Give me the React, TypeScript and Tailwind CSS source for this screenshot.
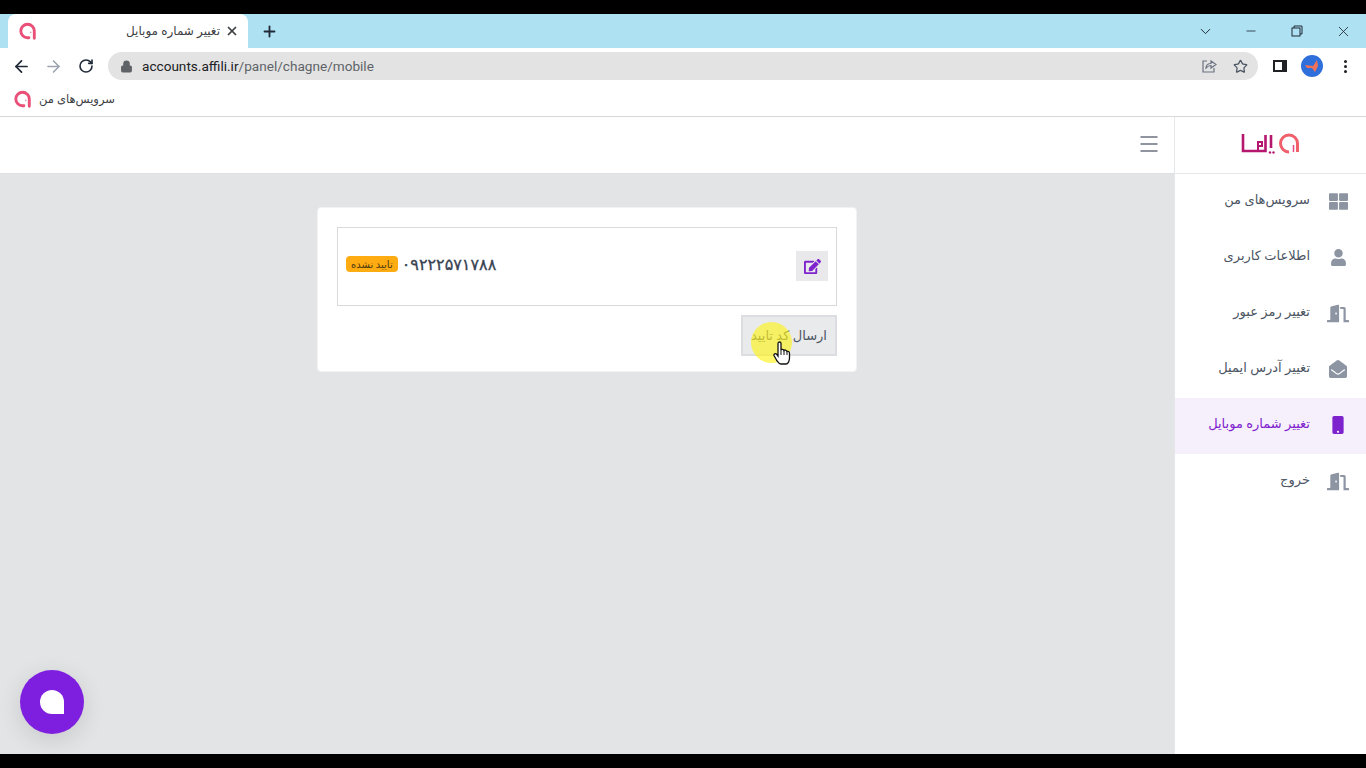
import { ArrowLeft, ArrowRight, RotateCw, Lock, Star, X, Plus, ChevronDown, Minus, Menu } from "lucide-react";
import { FaThLarge, FaUser, FaDoorOpen, FaEnvelopeOpen, FaMobile, FaEdit } from "react-icons/fa";
import type { ReactNode } from "react";

const FA = "font-['Noto_Sans','DejaVu_Sans',sans-serif]";

function AffiliMark({ size = 18 }: { size?: number }) {
  return (
    <svg width={size} height={size} viewBox="0 0 20 20" fill="none">
      <path d="M17 18 V10 A7.5 7.5 0 1 0 9.5 17.5 H11" stroke="#ea4f78" strokeWidth="3.2" strokeLinecap="round" />
      <circle cx="13" cy="11.5" r="1" fill="#d9a0b8" />
    </svg>
  );
}

function NavItem({ icon, label, active }: { icon: ReactNode; label: string; active?: boolean }) {
  return (
    <div className={`h-14 flex items-center pr-[17px] gap-[17px] ${active ? "bg-[#f6f0fc] text-[#7e22ce]" : "text-[#4b5563]"}`}>
      <span className="w-[22px] mb-[2px] flex justify-center shrink-0">{icon}</span>
      <span className="text-[13px] pb-[5px]">{label}</span>
    </div>
  );
}

export default function App() {
  return (
    <div className="h-screen overflow-hidden bg-black flex flex-col py-[14px] relative">
      {/* tab strip */}
      <div className="h-[34px] bg-[#aee1f1] flex items-end pl-2 shrink-0" dir="ltr">
        <div className="w-[240px] h-[34px] bg-white rounded-t-lg flex items-center pl-[11px] pr-[9px]">
          <AffiliMark />
          <span className={`ml-auto text-xs text-[#3c4043] ${FA}`} dir="rtl">تغییر شماره موبایل</span>
          <X size={14} strokeWidth={3} className="ml-[5px] text-[#3c4043]" />
        </div>
        <Plus size={17} strokeWidth={2.6} className="ml-[13px] mb-[8px] text-[#1f2937]" />
        <div className="ml-auto flex items-center h-full text-[#1f2937]">
          <ChevronDown size={17} strokeWidth={1.4} className="mr-[30px]" />
          <Minus size={14} strokeWidth={1.4} className="mr-[33px]" />
          <svg width="12" height="12" viewBox="0 0 12 12" fill="none" stroke="currentColor" className="mr-[32px]">
            <rect x="1" y="3" width="8" height="8" />
            <path d="M3 3V1H11V9H9" />
          </svg>
          <X size={17} strokeWidth={1.2} className="mr-[14px]" />
        </div>
      </div>

      {/* address bar */}
      <div className="h-9 bg-white flex items-center shrink-0" dir="ltr">
        <ArrowLeft size={19} strokeWidth={2.2} className="ml-3 text-[#1f2937]" />
        <ArrowRight size={19} strokeWidth={2} className="ml-[13px] text-[#9ca3af]" />
        <RotateCw size={16} strokeWidth={2.4} className="ml-[15px] text-[#1f2937]" />
        <div className="ml-[14px] w-[1150px] h-7 rounded-full bg-[#e3e3e3] flex items-center pl-[12px] pr-[10px]">
          <Lock size={13} fill="#5f6368" className="text-[#5f6368]" />
          <span className="ml-[9px] text-[13.6px] font-['Roboto',sans-serif] text-[#202124]">
            accounts.affili.ir<span className="text-[#5f6368]">/panel/chagne/mobile</span>
          </span>
          <svg width="16" height="16" viewBox="0 0 16 16" fill="none" stroke="#6b7280" strokeWidth="1.2" className="ml-auto">
            <path d="M6 3H2V14H13V10" />
            <path d="M5 10C5 7 7 5.5 10 5.5V3L15 6.5L10 10V7.5C8 7.5 6.5 8.5 5 10Z" />
          </svg>
          <Star size={15} strokeWidth={2} className="ml-[16px] text-[#4b5563]" />
        </div>
        <svg width="14" height="12" viewBox="0 0 14 12" className="ml-[15px]">
          <path d="M0 0H14V12H0Z M2 2V10H9V2Z" fill="#202124" fillRule="evenodd" />
        </svg>
        <div className="ml-[14px] w-[22px] h-[22px] rounded-full bg-[#2f6fdb] flex items-center justify-center">
          <svg width="14" height="12" viewBox="0 0 14 12">
            <path d="M0 5L8 6L12 0L13 6L10 12L7 8L2 8Z" fill="#f0705a" />
          </svg>
        </div>
        <div className="ml-[21px] flex flex-col gap-[2px]">
          <span className="w-[3px] h-[3px] rounded-full bg-[#202124]" />
          <span className="w-[3px] h-[3px] rounded-full bg-[#202124]" />
          <span className="w-[3px] h-[3px] rounded-full bg-[#202124]" />
        </div>
      </div>

      {/* bookmarks */}
      <div className="h-[33px] bg-white border-b border-[#d8d8d8] flex items-center pl-[14px] pb-[2px] gap-[7px] shrink-0" dir="ltr">
        <AffiliMark />
        <span className={`text-[11.5px] text-[#3c4043] ${FA}`} dir="rtl">سرویس‌های من</span>
      </div>

      {/* page */}
      <div className={`flex-1 min-h-0 flex bg-[#e3e4e6] ${FA}`} dir="rtl">
        <aside className="w-[192px] bg-white border-l border-[#e5e7eb] shrink-0">
          <div className="h-[57px] flex items-center justify-center border-b border-[#e5e7eb]">
            <svg width="60" height="24" viewBox="0 0 60 24" fill="none">
              <path d="M2 1V18H24.5V2" stroke="#b5176f" strokeWidth="2.6" />
              <path d="M17 17V9H21V13H17" stroke="#b5176f" strokeWidth="2" />
              <path d="M30 2V15" stroke="#b5176f" strokeWidth="2.6" />
              <circle cx="29" cy="19.5" r="1.2" fill="#b5176f" />
              <circle cx="32.5" cy="19.5" r="1.2" fill="#b5176f" />
              <path d="M56.5 19V10.5A8.5 8.5 0 1 0 48 19" stroke="#f0606a" strokeWidth="3" />
              <path d="M52.5 12V19" stroke="#e84a7f" strokeWidth="1.5" />
            </svg>
          </div>
          <NavItem label="سرویس‌های من" icon={<FaThLarge size={19} className="text-[#8d95a3]" />} />
          <NavItem label="اطلاعات کاربری" icon={<FaUser size={17} className="text-[#8d95a3]" />} />
          <NavItem label="تغییر رمز عبور" icon={<FaDoorOpen size={23} className="text-[#8d95a3]" />} />
          <NavItem label="تغییر آدرس ایمیل" icon={<FaEnvelopeOpen size={18} className="text-[#8d95a3]" />} />
          <NavItem active label="تغییر شماره موبایل" icon={<FaMobile size={18} className="text-[#7e22ce]" />} />
          <NavItem label="خروج" icon={<FaDoorOpen size={23} className="text-[#8d95a3]" />} />
        </aside>

        <main className="flex-1 min-w-0 flex flex-col">
          <header className="h-[57px] bg-white border-b border-[#e0e0e0] flex items-center pr-[13px] pb-[2px] shrink-0">
            <Menu size={24} strokeWidth={1.5} className="text-[#6b7280]" />
          </header>
          <div className="flex-1 flex justify-center pt-[33px]">
            <section className="w-[540px] h-[165px] bg-white rounded border border-[#f1f2f4] p-[19px]">
              <div className="h-[79px] border border-[#d9d9d9] flex items-center px-2">
                <button className="w-8 h-[30px] mb-[1px] bg-[#e9e9ec] flex items-center justify-center">
                  <FaEdit size={17} className="text-[#7e22ce]" />
                </button>
                <div className="mr-auto mb-[5px] flex items-center gap-1" dir="ltr">
                  <span className="h-4 px-[5px] rounded bg-[#ffab12] text-[10px] leading-4 text-[#4b3a10]" dir="rtl">تایید نشده</span>
                  <span className="text-[16px] font-normal text-[#374151] [-webkit-text-stroke:0.3px_#374151]">۰۹۲۲۲۵۷۱۷۸۸</span>
                </div>
              </div>
              <button className="mt-[9px] block w-[96px] h-[41px] bg-[#e9eaec] border-2 border-[#dcdde0] text-[13px] text-[#4b5563]">
                ارسال کد تایید
              </button>
            </section>
          </div>
        </main>
      </div>

      {/* recording highlight and pointer */}
      <div className="absolute left-[751px] top-[322px] w-[41px] h-[41px] rounded-full bg-[#fdf21c]/65" />
      <svg width="18" height="24" viewBox="0 0 18 24" className="absolute left-[773px] top-[341px]">
        <path d="M5 2.5C5 0.5 8 0.5 8 2.5V9C8.5 8 10.5 8 11 9.5C11.5 8.7 13.5 8.7 14 10.5C15 10 16.5 10.5 16.5 12.5V17C16.5 20 15 23 13 23H8C6 23 5 21 3.5 19L1 14.5C0.5 13 2.5 12 3.5 13L5 15Z" fill="#fff" stroke="#111" strokeWidth="1.3" />
        <path d="M8 9V14M11 9.5V14M14 10.5V14" stroke="#111" strokeWidth="1" />
      </svg>

      {/* chat launcher */}
      <div className="absolute left-5 top-[670px] w-16 h-16 rounded-full bg-[#7e1fe0] shadow-[0_6px_24px_rgba(0,0,0,0.12)] flex items-center justify-center">
        <div className="w-6 h-6 bg-white rounded-t-full rounded-bl-full" />
      </div>
    </div>
  );
}
